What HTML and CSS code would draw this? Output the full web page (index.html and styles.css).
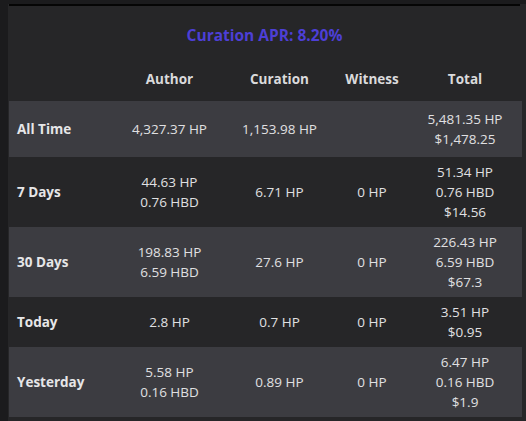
FILE: index.html
```html
<!DOCTYPE html>
<html>
<head>
<meta charset="utf-8">
<link rel="stylesheet" href="styles.css">
</head>
<body>
<div class="panel">
  <div class="title">Curation APR: 8.20%</div>
  <table class="stats">
    <colgroup>
      <col class="c-label"><col class="c-author"><col class="c-cur"><col class="c-wit"><col class="c-total"><col class="c-pad">
    </colgroup>
    <thead>
      <tr class="head"><th></th><th>Author</th><th>Curation</th><th>Witness</th><th>Total</th><th></th></tr>
    </thead>
    <tbody>
      <tr class="light first"><td class="label">All Time</td><td>4,327.37 HP</td><td>1,153.98 HP</td><td></td><td>5,481.35 HP<br>$1,478.25</td><td></td></tr>
      <tr class="dark"><td class="label">7 Days</td><td>44.63 HP<br>0.76 HBD</td><td>6.71 HP</td><td>0 HP</td><td>51.34 HP<br>0.76 HBD<br>$14.56</td><td></td></tr>
      <tr class="light"><td class="label">30 Days</td><td>198.83 HP<br>6.59 HBD</td><td>27.6 HP</td><td>0 HP</td><td>226.43 HP<br>6.59 HBD<br>$67.3</td><td></td></tr>
      <tr class="dark"><td class="label">Today</td><td>2.8 HP</td><td>0.7 HP</td><td>0 HP</td><td>3.51 HP<br>$0.95</td><td></td></tr>
      <tr class="light"><td class="label">Yesterday</td><td>5.58 HP<br>0.16 HBD</td><td>0.89 HP</td><td>0 HP</td><td>6.47 HP<br>0.16 HBD<br>$1.9</td><td></td></tr>
    </tbody>
  </table>
</div>
</body>
</html>
```
FILE: styles.css
```css
html, body {
  margin: 0;
  padding: 0;
  background: #1b1b1d;
  height: 100%;
}
body {
  font-family: "Open Sans", "Noto Sans", sans-serif;
  overflow: hidden;
}
.panel {
  margin: 4px 0 0 8px;
  padding-left: 1px;
  background: #262628;
  min-height: 420px;
}
.title {
  text-align: center;
  color: #4d3fd6;
  font-weight: 700;
  font-size: 15.5px;
  line-height: 20px;
  padding: 19px 0 12px;
  border-top: 2px solid #050505;
  margin-right: 6px;
}
.stats {
  border-collapse: collapse;
  width: 513px;
  table-layout: fixed;
  font-size: 13.5px;
  line-height: 20px;
  color: #e0e0e2;
}
.c-label { width: 103px; }
.c-author { width: 115px; }
.c-cur { width: 105px; }
.c-wit { width: 80px; }
.c-total { width: 106px; }
.c-pad { width: 4px; }
.head th {
  font-weight: 700;
  color: #dadadc;
  height: 44px;
  padding: 0;
  vertical-align: middle;
  text-align: center;
}
.stats td {
  padding: 5px 0;
  text-align: center;
  vertical-align: middle;
}
.stats td.label {
  text-align: left;
  padding-left: 8px;
  font-weight: 700;
  color: #e6e6e8;
}
.light { background: #3c3c41; }
.dark { background: #262628; }
.first td { padding-top: 8px; padding-bottom: 8px; }
```
